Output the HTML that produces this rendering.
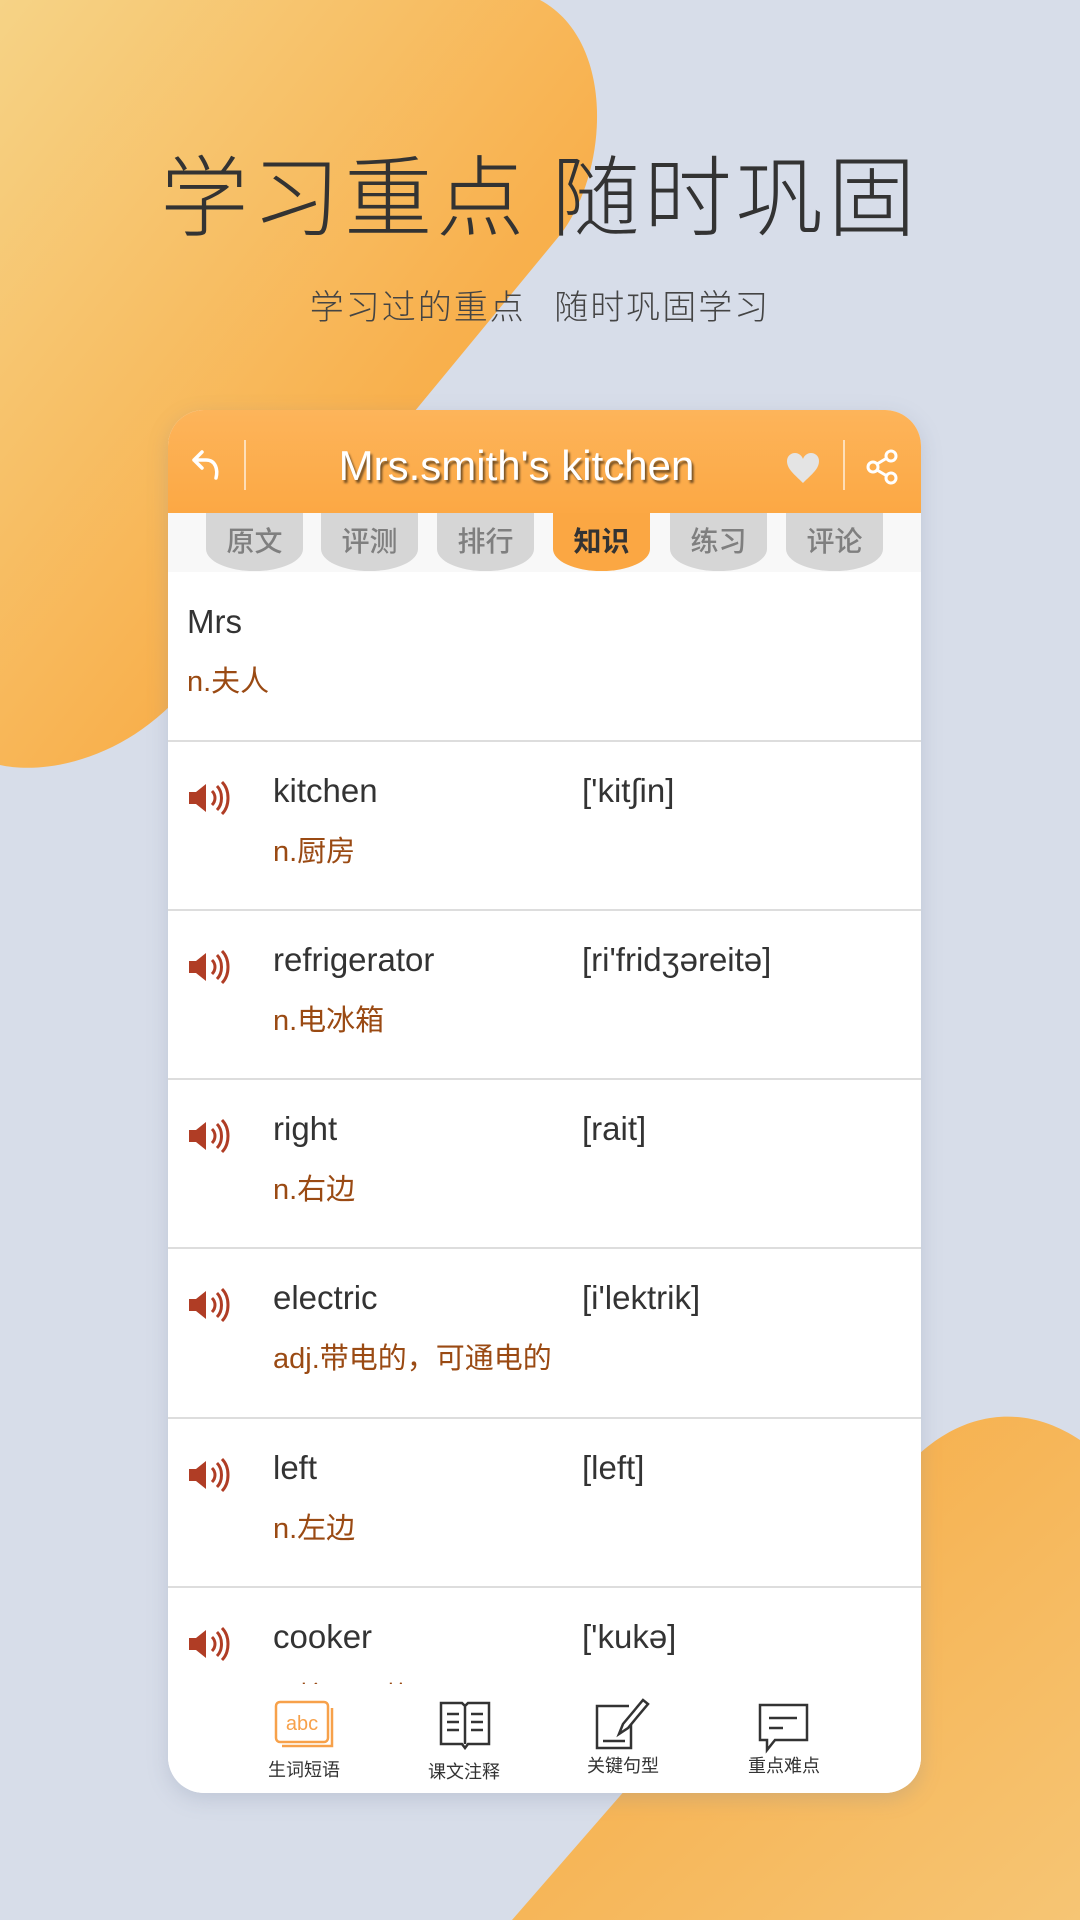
<!DOCTYPE html>
<html><head><meta charset="utf-8"><style>
*{margin:0;padding:0;box-sizing:border-box}
body{width:1080px;height:1920px;background:#d7dde9;position:relative;overflow:hidden;font-family:"Liberation Sans","Noto Sans CJK SC",sans-serif}
.abs{position:absolute}
h1{position:absolute;left:0;width:1080px;top:128px;text-align:center;font-size:88px;font-weight:300;color:#333;letter-spacing:4px;font-family:"Noto Sans CJK SC",sans-serif}
.sub{position:absolute;left:0;width:1080px;top:280px;text-align:center;font-size:34px;color:#444;letter-spacing:2px;font-family:"Noto Sans CJK SC",sans-serif;font-weight:300}
.card{position:absolute;left:168px;top:410px;width:753px;height:1383px;background:#fff;border-radius:36px;overflow:hidden;box-shadow:0 6px 20px rgba(120,130,160,.25)}
.hdr{position:absolute;left:0;top:0;width:753px;height:103px;background:linear-gradient(#fdb45a,#fca844)}
.title{position:absolute;left:-28px;width:753px;top:32px;text-align:center;color:#fff;font-size:42px;text-shadow:2px 3px 2px rgba(0,0,0,.55)}
.tabs{position:absolute;left:0;top:103px;width:753px;height:59px;background:#f8f8f8}
.tab{position:absolute;top:0;width:97px;height:58px;background:#d6d6d6;border-radius:0 0 48px 48px/0 0 22px 22px;text-align:center;font-size:28px;line-height:54px;color:#7f7f7f;font-weight:500;font-family:"Noto Sans CJK SC",sans-serif}
.tab.on{background:#fba743;color:#333;font-weight:bold}
.row{position:absolute;left:0;width:753px;height:169px;border-top:2px solid #ddd}
.w{position:absolute;left:105px;top:30px;font-size:33px;color:#333}
.p{position:absolute;left:414px;top:30px;font-size:33px;color:#333}
.m{position:absolute;left:105px;top:86px;font-size:29px;color:#9a4a13;font-family:"Liberation Sans","Noto Sans CJK SC",sans-serif}
.spk{position:absolute;left:19px;top:36px}
.nav{position:absolute;top:1290px;width:160px;text-align:center;font-size:18px;color:#333;font-family:"Noto Sans CJK SC",sans-serif}
</style></head><body>
<svg class="abs" style="left:0;top:0" width="1080" height="1920">
<defs>
<linearGradient id="g1" x1="0" y1="0" x2="1" y2="1"><stop offset="0" stop-color="#f6d386"/><stop offset="0.6" stop-color="#f8b04d"/><stop offset="1" stop-color="#f7a73d"/></linearGradient>
<linearGradient id="g2" x1="0" y1="0" x2="1" y2="1"><stop offset="0" stop-color="#f7a73d"/><stop offset="1" stop-color="#f6c574"/></linearGradient>
</defs>
<path d="M0,0 L540,0 C615,40 610,170 560,235 L185,690 C125,760 45,775 0,765 Z" fill="url(#g1)"/>
<path d="M1080,1440 C1020,1400 950,1410 895,1480 L512,1920 L1080,1920 Z" fill="url(#g2)"/>
</svg>
<h1>学习重点 随时巩固</h1>
<div class="sub">学习过的重点&nbsp;&nbsp;&nbsp;随时巩固学习</div>
<div class="card">
 <div class="hdr">
  <svg class="abs" style="left:22px;top:38px" width="34" height="38" viewBox="0 0 34 38"><path d="M12 4 L4 12 L12 20 M4 12 H16 C26 12 28 22 26 30" fill="none" stroke="#fff" stroke-width="3.5" stroke-linecap="round" stroke-linejoin="round"/></svg>
  <div class="abs" style="left:76px;top:30px;width:2px;height:50px;background:rgba(255,255,255,.6)"></div>
  <div class="title">Mrs.smith's kitchen</div>
  <svg class="abs" style="left:618px;top:42px" width="34" height="32" viewBox="0 0 34 32"><path d="M17 31 C8 22 1 17 1 9 C1 4 5 1 9 1 C13 1 16 4 17 7 C18 4 21 1 25 1 C29 1 33 4 33 9 C33 17 26 22 17 31Z" fill="#e4e4e4"/></svg>
  <div class="abs" style="left:675px;top:30px;width:2px;height:50px;background:rgba(255,255,255,.6)"></div>
  <svg class="abs" style="left:697px;top:38px" width="34" height="38" viewBox="0 0 34 38"><circle cx="26" cy="8" r="5" fill="none" stroke="#fff" stroke-width="3"/><circle cx="8" cy="19" r="5" fill="none" stroke="#fff" stroke-width="3"/><circle cx="26" cy="30" r="5" fill="none" stroke="#fff" stroke-width="3"/><path d="M12 16 L22 10 M12 22 L22 28" stroke="#fff" stroke-width="3"/></svg>
 </div>
 <div class="tabs">
  <div class="tab" style="left:38px">原文</div>
  <div class="tab" style="left:153px">评测</div>
  <div class="tab" style="left:269px">排行</div>
  <div class="tab on" style="left:385px">知识</div>
  <div class="tab" style="left:502px">练习</div>
  <div class="tab" style="left:618px">评论</div>
 </div>
 <div class="abs" style="left:19px;top:193px;font-size:33px;color:#333">Mrs</div>
 <div class="abs" style="left:19px;top:248px;font-size:29px;color:#9a4a13">n.夫人</div>

 <div class="row" style="top:330px"><svg class="spk" width="44" height="40" viewBox="0 0 44 40"><path d="M2 14 H9 L19 6 V34 L9 26 H2Z" fill="#b03d25"/><path d="M25 13 C29 17 29 23 25 27 M30 8 C36 14 36 26 30 32 M35 4 C43 12 43 28 35 36" fill="none" stroke="#b03d25" stroke-width="3"/></svg><div class="w">kitchen</div><div class="p">['kit∫in]</div><div class="m">n.厨房</div></div>
 <div class="row" style="top:499px"><svg class="spk" width="44" height="40" viewBox="0 0 44 40"><path d="M2 14 H9 L19 6 V34 L9 26 H2Z" fill="#b03d25"/><path d="M25 13 C29 17 29 23 25 27 M30 8 C36 14 36 26 30 32 M35 4 C43 12 43 28 35 36" fill="none" stroke="#b03d25" stroke-width="3"/></svg><div class="w">refrigerator</div><div class="p">[ri'fridʒəreitə]</div><div class="m">n.电冰箱</div></div>
 <div class="row" style="top:668px"><svg class="spk" width="44" height="40" viewBox="0 0 44 40"><path d="M2 14 H9 L19 6 V34 L9 26 H2Z" fill="#b03d25"/><path d="M25 13 C29 17 29 23 25 27 M30 8 C36 14 36 26 30 32 M35 4 C43 12 43 28 35 36" fill="none" stroke="#b03d25" stroke-width="3"/></svg><div class="w">right</div><div class="p">[rait]</div><div class="m">n.右边</div></div>
 <div class="row" style="top:837px"><svg class="spk" width="44" height="40" viewBox="0 0 44 40"><path d="M2 14 H9 L19 6 V34 L9 26 H2Z" fill="#b03d25"/><path d="M25 13 C29 17 29 23 25 27 M30 8 C36 14 36 26 30 32 M35 4 C43 12 43 28 35 36" fill="none" stroke="#b03d25" stroke-width="3"/></svg><div class="w">electric</div><div class="p">[i'lektrik]</div><div class="m">adj.带电的，可通电的</div></div>
 <div class="row" style="top:1007px"><svg class="spk" width="44" height="40" viewBox="0 0 44 40"><path d="M2 14 H9 L19 6 V34 L9 26 H2Z" fill="#b03d25"/><path d="M25 13 C29 17 29 23 25 27 M30 8 C36 14 36 26 30 32 M35 4 C43 12 43 28 35 36" fill="none" stroke="#b03d25" stroke-width="3"/></svg><div class="w">left</div><div class="p">[left]</div><div class="m">n.左边</div></div>
 <div class="row" style="top:1176px"><svg class="spk" width="44" height="40" viewBox="0 0 44 40"><path d="M2 14 H9 L19 6 V34 L9 26 H2Z" fill="#b03d25"/><path d="M25 13 C29 17 29 23 25 27 M30 8 C36 14 36 26 30 32 M35 4 C43 12 43 28 35 36" fill="none" stroke="#b03d25" stroke-width="3"/></svg><div class="w">cooker</div><div class="p">['kukə]</div><div class="m">n.炉子，炊具</div></div>
 <div class="abs" style="left:0;top:1274px;width:753px;height:109px;background:#fff"></div>
 <svg class="abs" style="left:106px;top:1290px" width="60" height="50" viewBox="0 0 60 50"><rect x="2" y="2" width="52" height="40" rx="4" fill="none" stroke="#f7a14a" stroke-width="2.5"/><path d="M58 8 V46 H8" fill="none" stroke="#f7a14a" stroke-width="2.5"/><text x="28" y="30" text-anchor="middle" font-size="20" fill="#f7a14a" font-family="Liberation Sans">abc</text></svg>
 <svg class="abs" style="left:270px;top:1290px" width="54" height="50" viewBox="0 0 54 50"><path d="M3 3 H24 L27 6 L30 3 H51 V44 H30 L27 48 L24 44 H3Z M27 6 V44" fill="none" stroke="#333" stroke-width="2.5"/><path d="M9 14 H21 M9 22 H21 M9 30 H21 M33 14 H45 M33 22 H45 M33 30 H45" stroke="#333" stroke-width="2.5"/></svg>
 <svg class="abs" style="left:425px;top:1286px" width="62" height="56" viewBox="0 0 62 56"><path d="M36 10 H4 V52 H38 V28" fill="none" stroke="#333" stroke-width="2.5"/><path d="M26 38 L30 28 L50 4 L55 8 L35 32 Z" fill="none" stroke="#333" stroke-width="2.5"/><path d="M10 45 H32" stroke="#333" stroke-width="2.5"/></svg>
 <svg class="abs" style="left:589px;top:1292px" width="54" height="52" viewBox="0 0 54 52"><path d="M3 3 H50 V38 H18 L10 48 V38 H3Z" fill="none" stroke="#333" stroke-width="2.5"/><path d="M12 16 H40 M12 26 H26" stroke="#333" stroke-width="2.5"/></svg>
 <div class="nav" style="left:56px;top:1346px">生词短语</div>
 <div class="nav" style="left:216px;top:1348px">课文注释</div>
 <div class="nav" style="left:375px;top:1342px">关键句型</div>
 <div class="nav" style="left:536px;top:1342px">重点难点</div>
</div>
</body></html>
